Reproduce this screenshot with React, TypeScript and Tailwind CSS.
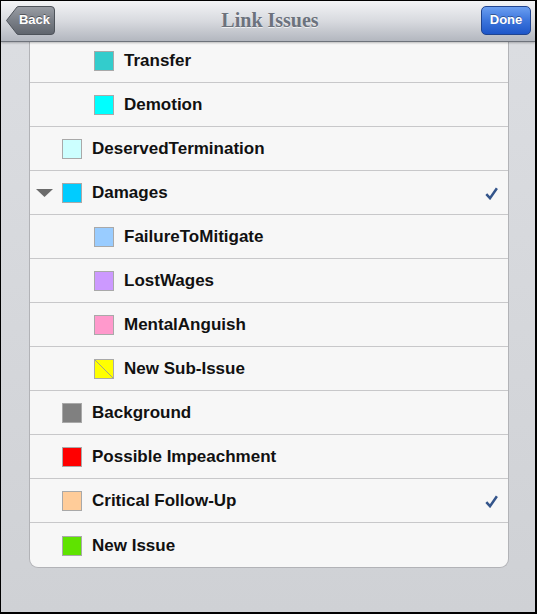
import React from "react";

type Row = { label: string; color: string; level: 0 | 1; checked?: boolean; expanded?: boolean; diag?: boolean };

const rows: Row[] = [
  { label: "Transfer", color: "#33cccc", level: 1 },
  { label: "Demotion", color: "#00ffff", level: 1 },
  { label: "DeservedTermination", color: "#ccffff", level: 0 },
  { label: "Damages", color: "#00ccff", level: 0, checked: true, expanded: true },
  { label: "FailureToMitigate", color: "#99ccff", level: 1 },
  { label: "LostWages", color: "#cc99ff", level: 1 },
  { label: "MentalAnguish", color: "#ff99cc", level: 1 },
  { label: "New Sub-Issue", color: "#ffff00", level: 1, diag: true },
  { label: "Background", color: "#808080", level: 0 },
  { label: "Possible Impeachment", color: "#ff0000", level: 0 },
  { label: "Critical Follow-Up", color: "#ffcc99", level: 0, checked: true },
  { label: "New Issue", color: "#5fe300", level: 0 },
];

function Check() {
  return (
    <svg width="13" height="13" viewBox="0 0 13 13">
      <path d="M1.3 7.2 L5 11.2 L11.9 1.2" fill="none" stroke="#34558b" strokeWidth="2.5" strokeLinejoin="miter" />
    </svg>
  );
}

export default function App() {
  return (
    <div
      className="w-[537px] h-[614px] border-t border-l border-r-2 border-b-2 border-black bg-gradient-to-b from-[#dcdee2] to-[#cfd1d5] flex flex-col overflow-hidden"
      style={{ fontFamily: "'Liberation Sans', Arial, sans-serif" }}
    >
      <div className="relative z-10 h-[41px] shrink-0 border-b border-[#6e737b] bg-gradient-to-b from-[#f3f4f6] via-[#d8dadf] to-[#b3b7bf] flex items-center justify-between px-[5px] shadow-[0_1px_2px_rgba(0,0,0,0.25)]">
        <div className="relative h-[29px] w-[49px] mt-[-2px]">
          <svg width="49" height="29" viewBox="0 0 49 29" className="absolute inset-0">
            <defs>
              <linearGradient id="bk" x1="0" y1="0" x2="0" y2="1">
                <stop offset="0" stopColor="#9a9ea5" />
                <stop offset="0.5" stopColor="#7a7f87" />
                <stop offset="1" stopColor="#60656d" />
              </linearGradient>
            </defs>
            <path d="M0.5 14.5 L11 1 Q11.8 0.5 13 0.5 L45 0.5 Q48.5 0.5 48.5 4 L48.5 25 Q48.5 28.5 45 28.5 L13 28.5 Q11.8 28.5 11 28 Z" fill="url(#bk)" stroke="#4e535a" />
          </svg>
          <span className="absolute inset-0 flex items-center justify-center pl-[8px] text-white text-[13px] font-bold [text-shadow:0_-1px_0_rgba(0,0,0,0.4)]">Back</span>
        </div>
        <div
          className="text-[20px] font-bold text-[#6c727d] [text-shadow:0_1px_0_rgba(255,255,255,0.7)] mt-[-3px] ml-[4px]"
          style={{ fontFamily: "'Liberation Serif', 'DejaVu Serif', serif" }}
        >
          Link Issues
        </div>
        <div className="h-[29px] w-[50px] mt-[-2px] mr-[-1px] rounded-[5px] border border-[#20448f] bg-gradient-to-b from-[#6b9ef0] via-[#3c75dc] to-[#1e56c8] flex items-center justify-center text-white text-[13px] font-bold [text-shadow:0_-1px_0_rgba(0,0,0,0.35)]">
          Done
        </div>
      </div>
      <div className="flex-1 flex">
        <div className="w-[28px]" />
        <div className="w-[480px] -mt-[3px] self-start bg-[#f7f7f7] border-x border-b border-[#b2b3b7] rounded-b-[9px] overflow-hidden">
          {rows.map((r, i) => (
            <div
              key={r.label}
              className={`h-[44px] flex items-center pt-[1px] ${i < rows.length - 1 ? "border-b border-[#c8c8ca]" : ""} ${r.level === 1 ? "pl-[64px]" : "pl-[32px]"} pr-[10px]`}
            >
              {r.expanded && (
                <svg width="17" height="8" viewBox="0 0 17 8" className="ml-[-26px] mr-[9px]">
                  <path d="M0 0 L17 0 L8.5 8 Z" fill="#6b6b6b" />
                </svg>
              )}
              <div
                className="relative w-[20px] h-[20px] border border-[#a9a9a9] shrink-0 overflow-hidden"
                style={{ backgroundColor: r.color }}
              >
                {r.diag && (
                  <svg width="18" height="18" viewBox="0 0 18 18" className="absolute inset-0">
                    <line x1="0" y1="0" x2="18" y2="18" stroke="#8a8aa8" strokeWidth="0.8" />
                  </svg>
                )}
              </div>
              <span className="ml-[10px] text-[17px] font-bold text-[#111] flex-1">{r.label}</span>
              {r.checked && <Check />}
            </div>
          ))}
        </div>
        <div className="flex-1" />
      </div>
    </div>
  );
}
